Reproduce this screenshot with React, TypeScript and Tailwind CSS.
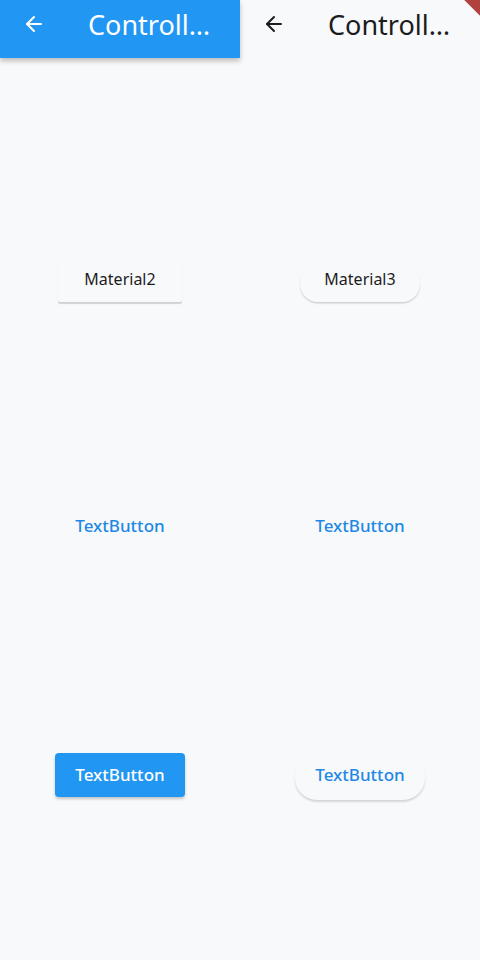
import { ArrowLeft } from "lucide-react";

const font = { fontFamily: '"Noto Sans", Roboto, sans-serif' };

function AppBar({ dark }: { dark: boolean }) {
  return (
    <div
      className={
        dark
          ? "h-[58px] bg-[#2196f3] text-white flex items-start pt-[6px] shadow-[0_3px_5px_rgba(0,0,0,0.25)] relative z-10"
          : "h-[58px] bg-[#f8f9fb] text-[#1c1c1c] flex items-start pt-[6px]"
      }
    >
      <div className="w-[68px] h-[36px] flex items-center justify-center">
        <ArrowLeft size={24} strokeWidth={2} />
      </div>
      <div className="ml-[20px] h-[36px] flex items-center text-[27px] leading-none whitespace-nowrap">
        Controll…
      </div>
    </div>
  );
}

function Column({ m3 }: { m3: boolean }) {
  return (
    <div className="flex-1 flex flex-col">
      <AppBar dark={!m3} />
      <div className="flex flex-col items-center">
        {/* style buttons */}
        <div className="mt-[206px] h-[38px] flex items-center justify-center">
          {m3 ? (
            <button className="w-[120px] h-[38px] pb-[8px] rounded-[18px] bg-[#f8f9fb] text-[#1d1d1f] text-[16px] shadow-[0_1.5px_1.5px_rgba(0,0,0,0.16)]">
              Material3
            </button>
          ) : (
            <button className="w-[124px] h-[38px] pb-[8px] rounded-[2px] bg-[#f8f9fb] text-[#1d1d1f] text-[16px] shadow-[0_1.5px_1px_rgba(0,0,0,0.16)]">
              Material2
            </button>
          )}
        </div>

        {/* plain text buttons */}
        <div className="mt-[206px] h-[36px] flex items-center justify-center">
          <button className="px-4 h-[36px] text-[#1e88e5] text-[17px] font-medium">TextButton</button>
        </div>

        {/* elevated text buttons */}
        <div className="mt-[207px] h-[48px] flex items-center justify-center">
          {m3 ? (
            <button className="w-[130px] h-[46px] mt-[4px] pb-[4px] rounded-[22px] bg-[#f8f9fb] text-[#1e88e5] text-[17px] font-medium shadow-[0_2px_2px_rgba(0,0,0,0.14)]">
              TextButton
            </button>
          ) : (
            <button className="w-[130px] h-[44px] rounded-[4px] bg-[#2196f3] text-white text-[17px] font-medium shadow-[0_2px_3px_rgba(0,0,0,0.22)]">
              TextButton
            </button>
          )}
        </div>
      </div>
    </div>
  );
}

export default function App() {
  return (
    <div className="w-[480px] h-[960px] bg-[#f8f9fb] flex overflow-hidden relative" style={font}>
      <Column m3={false} />
      <Column m3={true} />
      {/* debug banner corner */}
      <div className="absolute top-[-14px] right-[-52px] w-[120px] h-[18px] bg-[#b0413e] rotate-45" />
    </div>
  );
}
